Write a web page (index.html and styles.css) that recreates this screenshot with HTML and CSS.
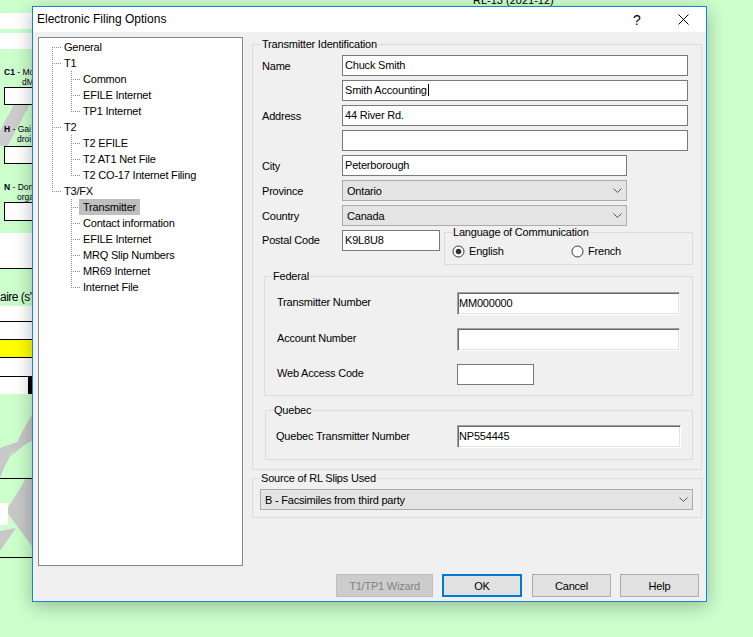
FILE: index.html
```html
<!DOCTYPE html>
<html lang="en">
<head>
<meta charset="utf-8">
<title>Electronic Filing Options</title>
<link rel="stylesheet" href="styles.css">
</head>
<body>
<div class="app-title"><span>RL-13 (2021-12)</span></div>
<div class="strip">
  <div class="band h13"></div>
  <div class="band white h16"></div>
  <div class="band h4"></div>
  <div class="band white h16"></div>
  <div class="band bl h38"><div class="bl-l1"><b>C1</b> - Mo</div><div class="bl-l2 in22">dM</div></div>
  <div class="bbox h18"></div>
  <div class="band bl h41 pt19 streak"><div class="bl-l1"><b>H</b> - Gai</div><div class="bl-l2 in17">droi</div></div>
  <div class="bbox h18"></div>
  <div class="band bl h38"><div class="bl-l1"><b>N</b> - Don</div><div class="bl-l2 in17">orga</div></div>
  <div class="bbox h19"></div>
  <div class="band h12"></div>
  <div class="band white lineb h36"></div>
  <div class="band big h37">aire (s'</div>
  <div class="band white lineb h16"></div>
  <div class="band white h17"></div>
  <div class="band yellow h19"></div>
  <div class="band white h18"></div>
  <div class="dd"><div class="dd-f"></div><div class="dd-b"></div></div>
  <svg class="wm" width="32" height="84" viewBox="0 0 32 84"><path d="M34 18 Q20 38 12 62 Q24 48 44 42 Z" fill="#c8c8c8"/><path d="M0 54 Q10 50 21 47 Q8 62 0 84 Z" fill="#c8c8c8"/></svg>
  <div class="hline"></div>
  <svg class="wm" width="32" height="78" viewBox="0 0 32 78"><path d="M27 -2 L6 32 L34 70 L44 0 Z" fill="#c8c8c8"/><rect x="0" y="24" width="8" height="22" fill="#ffffff"/><path d="M0 52 L16 49 L0 72 Z" fill="#c8c8c8"/></svg>
  <div class="hline"></div>
</div>

<div class="dialog">
  <div class="titlebar">
    <div class="title">Electronic Filing Options</div>
    <div class="cap-btn cap-help">?</div>
    <div class="cap-btn"><svg width="11" height="11" viewBox="0 0 11 11"><path d="M0.5 0.5L10.5 10.5M10.5 0.5L0.5 10.5" stroke="#000" stroke-width="1" fill="none"/></svg></div>
  </div>
  <div class="dlg-body">
    <div class="dlg-main">
      <div class="tree">
        <div class="row"><i class="c first"></i><span class="lbl">General</span></div>
        <div class="row"><i class="c tee"></i><span class="lbl">T1</span></div>
        <div class="row"><i class="c pipe"></i><i class="c tee"></i><span class="lbl">Common</span></div>
        <div class="row"><i class="c pipe"></i><i class="c tee"></i><span class="lbl">EFILE Internet</span></div>
        <div class="row"><i class="c pipe"></i><i class="c ell"></i><span class="lbl">TP1 Internet</span></div>
        <div class="row"><i class="c tee"></i><span class="lbl">T2</span></div>
        <div class="row"><i class="c pipe"></i><i class="c tee"></i><span class="lbl">T2 EFILE</span></div>
        <div class="row"><i class="c pipe"></i><i class="c tee"></i><span class="lbl">T2 AT1 Net File</span></div>
        <div class="row"><i class="c pipe"></i><i class="c ell"></i><span class="lbl">T2 CO-17 Internet Filing</span></div>
        <div class="row"><i class="c ell"></i><span class="lbl">T3/FX</span></div>
        <div class="row"><i class="c"></i><i class="c tee"></i><span class="lbl sel">Transmitter</span></div>
        <div class="row"><i class="c"></i><i class="c tee"></i><span class="lbl">Contact information</span></div>
        <div class="row"><i class="c"></i><i class="c tee"></i><span class="lbl">EFILE Internet</span></div>
        <div class="row"><i class="c"></i><i class="c tee"></i><span class="lbl">MRQ Slip Numbers</span></div>
        <div class="row"><i class="c"></i><i class="c tee"></i><span class="lbl">MR69 Internet</span></div>
        <div class="row"><i class="c"></i><i class="c ell"></i><span class="lbl">Internet File</span></div>
      </div>
      <div class="panel">
        <fieldset class="grp ti">
          <legend>Transmitter Identification</legend>
          <div class="ti-grid">
            <div class="flab">Name</div><div class="edit">Chuck Smith</div>
            <div class="flab"></div><div class="edit">Smith Accounting<span class="caret"></span></div>
            <div class="flab">Address</div><div class="edit">44 River Rd.</div>
            <div class="flab"></div><div class="edit"></div>
            <div class="flab">City</div><div class="edit short">Peterborough</div>
            <div class="flab">Province</div><div class="combo short"><span>Ontario</span><svg width="9" height="5" viewBox="0 0 9 5"><path d="M0.5 0.5L4.5 4.5L8.5 0.5" stroke="#555" fill="none"/></svg></div>
            <div class="flab">Country</div><div class="combo short"><span>Canada</span><svg width="9" height="5" viewBox="0 0 9 5"><path d="M0.5 0.5L4.5 4.5L8.5 0.5" stroke="#555" fill="none"/></svg></div>
          </div>
          <div class="postal-row">
            <div class="flab pl">Postal Code</div>
            <div class="edit postal">K9L8U8</div>
            <fieldset class="grp lang">
              <legend>Language of Communication</legend>
              <div class="radios">
                <div class="radio"><svg width="13" height="13" viewBox="0 0 13 13"><circle cx="6.5" cy="6.5" r="5.5" fill="#fff" stroke="#333"/><circle cx="6.5" cy="6.5" r="2.8" fill="#333"/></svg>English</div>
                <div class="radio"><svg width="13" height="13" viewBox="0 0 13 13"><circle cx="6.5" cy="6.5" r="5.5" fill="#fff" stroke="#333"/></svg>French</div>
              </div>
            </fieldset>
          </div>
          <fieldset class="grp fed">
            <legend>Federal</legend>
            <div class="fed-grid">
              <div class="flab up3">Transmitter Number</div><div class="sunk">MM000000</div>
              <div class="flab up3">Account Number</div><div class="sunk"></div>
              <div class="flab up3">Web Access Code</div><div class="edit web"></div>
            </div>
          </fieldset>
          <fieldset class="grp qc">
            <legend>Quebec</legend>
            <div class="qc-grid">
              <div class="flab up1">Quebec Transmitter Number</div><div class="sunk">NP554445</div>
            </div>
          </fieldset>
        </fieldset>
        <fieldset class="grp src">
          <legend>Source of RL Slips Used</legend>
          <div class="combo"><span>B - Facsimiles from third party</span><svg width="9" height="5" viewBox="0 0 9 5"><path d="M0.5 0.5L4.5 4.5L8.5 0.5" stroke="#555" fill="none"/></svg></div>
        </fieldset>
      </div>
    </div>
    <div class="buttons">
      <div class="btn dis">T1/TP1 Wizard</div>
      <div class="btn def">OK</div>
      <div class="btn">Cancel</div>
      <div class="btn">Help</div>
    </div>
  </div>
</div>
</body>
</html>
```
FILE: styles.css
```css
* { box-sizing: border-box; }
html, body { margin: 0; padding: 0; }
body {
  width: 753px; height: 637px; overflow: hidden; position: relative;
  background: #ccffcc; color: #000;
  font-family: "Liberation Sans", Arial, sans-serif; font-size: 11px; letter-spacing: -0.2px;
}

/* background application (only the strip left of the dialog is visible) */
.app-title { display: flex; height: 0; padding-left: 473px; white-space: nowrap; letter-spacing: 0; }
.app-title span { margin-top: -6px; line-height: 13px; font-size: 11px; }
.strip { width: 32px; overflow: hidden; letter-spacing: 0; }
.band { width: 32px; }
.white { background: #fff; }
.yellow { background: #ffff00; border-top: 1px solid #000; border-bottom: 1px solid #000; }
.lineb { border-bottom: 1px solid #000; }
.h4 { height: 4px; } .h12 { height: 12px; } .h13 { height: 13px; } .h16 { height: 16px; }
.h17 { height: 17px; } .h18 { height: 18px; } .h19 { height: 19px; } .h36 { height: 36px; }
.h37 { height: 37px; } .h38 { height: 38px; } .h41 { height: 41px; }
.bl { padding-top: 18px; font-size: 8.5px; line-height: 10px; color: #000022; white-space: nowrap; overflow: hidden; }
.bl.pt19 { padding-top: 19px; }
.bl-l1 { padding-left: 4px; }
.in22 { padding-left: 22px; }
.in17 { padding-left: 17px; }
.streak { background: linear-gradient(118deg, transparent 0 12px, #cdcdcd 12px 26px, transparent 26px); }
.bbox { width: 28px; margin-left: 4px; border: 1px solid #000; border-right: 0; background: #fff; }
.big { padding-top: 20px; font-size: 12px; line-height: 16px; letter-spacing: -0.5px; white-space: nowrap; overflow: hidden; }
.dd { display: flex; height: 18px; border-top: 1px solid #000; width: 32px; }
.dd-f { width: 28px; background: #fff; }
.dd-b { flex: 1; background: #000; }
.wm { display: block; }
.hline { height: 1px; width: 32px; background: #000; }

/* dialog window */
.dialog {
  position: absolute; left: 32px; top: 6px; width: 675px; height: 596px;
  border: 1px solid #1883d7; background: #f0f0f0;
  display: flex; flex-direction: column;
  box-shadow: 0 4px 18px rgba(0, 0, 0, 0.28);
}
.titlebar { display: flex; align-items: center; height: 25px; background: #fff; flex: none; }
.title { flex: 1; padding-left: 4px; font-size: 12px; line-height: 25px; letter-spacing: 0; }
.cap-btn { width: 46px; height: 25px; display: flex; align-items: center; justify-content: center; }
.cap-help { font-size: 14px; letter-spacing: 0; padding-top: 1px; }
.dlg-body { flex: 1; display: flex; flex-direction: column; padding: 5px 4px 4px 5px; }
.dlg-main { display: flex; gap: 9px; height: 529px; flex: none; }

/* tree */
.tree { width: 205px; height: 529px; flex: none; background: #fff; border: 1px solid #828790; padding: 1px 0 0 3px; }
.row { display: flex; height: 16px; line-height: 16px; white-space: nowrap; }
.c {
  flex: none; width: 19px; height: 16px; padding-left: 10px;
  background-origin: content-box; background-clip: content-box; background-repeat: no-repeat;
}
.tee {
  background-image: repeating-linear-gradient(#8c8c8c 0 1px, transparent 1px 2px), repeating-linear-gradient(90deg, #8c8c8c 0 1px, transparent 1px 2px);
  background-position: 0 0, 0 8px; background-size: 1px 16px, 9px 1px;
}
.ell {
  background-image: repeating-linear-gradient(#8c8c8c 0 1px, transparent 1px 2px), repeating-linear-gradient(90deg, #8c8c8c 0 1px, transparent 1px 2px);
  background-position: 0 0, 0 8px; background-size: 1px 8px, 9px 1px;
}
.first {
  background-image: repeating-linear-gradient(#8c8c8c 0 1px, transparent 1px 2px), repeating-linear-gradient(90deg, #8c8c8c 0 1px, transparent 1px 2px);
  background-position: 0 8px, 0 8px; background-size: 1px 8px, 9px 1px;
}
.pipe {
  background-image: repeating-linear-gradient(#8c8c8c 0 1px, transparent 1px 2px);
  background-position: 0 0; background-size: 1px 16px;
}
.lbl { margin-left: -1px; padding: 0 4px; height: 16px; }
.lbl.sel { background: #bfbfbf; }

/* right panel */
.panel { width: 450px; flex: none; display: flex; flex-direction: column; }
.grp { margin: 0; min-width: 0; border: 1px solid #dcdcdc; padding: 0; }
.grp > legend { padding: 0 1px; line-height: 13px; height: 13px; margin-left: 0; }
.ti { margin-top: 1px; padding: 4px 0 9px 0; }
.ti > legend { margin-left: 8px; }
.ti-grid { display: grid; grid-template-columns: 80px 1fr; row-gap: 4px; margin: 0 13px 0 9px; align-items: center; }
.flab { white-space: nowrap; }
.up3 { padding-bottom: 3px; }
.up1 { padding-bottom: 1px; }
.edit { height: 21px; border: 1px solid #7a7a7a; background: #fff; padding-left: 2px; line-height: 19px; white-space: nowrap; }
.short { width: 285px; }
.caret { display: inline-block; width: 1px; height: 12px; background: #000; vertical-align: -2px; margin-left: 1px; }
.combo {
  height: 21px; border: 1px solid #acacac; background: #e4e4e4;
  display: flex; align-items: center; justify-content: space-between; padding: 0 4px 0 4px; white-space: nowrap;
}
.combo svg { flex: none; }
.postal-row { display: flex; align-items: flex-start; margin: 0 8px 0 9px; }
.pl { width: 80px; height: 21px; margin-top: 4px; line-height: 21px; flex: none; }
.postal { width: 98px; margin-top: 4px; flex: none; }
.lang { flex: 1; margin-left: 4px; padding: 5px 0 6px 7px; }
.radios { display: grid; grid-template-columns: 119px 1fr; height: 14px; }
.radio { display: flex; align-items: center; gap: 4px; line-height: 14px; }
.radio svg { flex: none; }
.fed { margin: 5px 8px 0 11px; padding: 9px 0 10px 0; }
.fed > legend { margin-left: 7px; }
.fed-grid { display: grid; grid-template-columns: 180px 1fr; row-gap: 13px; margin: 0 12px 0 12px; align-items: center; }
.sunk {
  height: 23px; background: #fff; border: 1px solid; border-color: #a0a0a0 #ffffff #ffffff #a0a0a0;
  box-shadow: inset 1px 1px 0 #696969, inset -1px -1px 0 #e3e3e3;
  padding-left: 1px; line-height: 21px; white-space: nowrap;
}
.web { width: 77px; }
.qc { margin: 8px 8px 0 12px; padding: 8px 0 11px 0; }
.qc > legend { margin-left: 7px; }
.qc-grid { display: grid; grid-template-columns: 181px 1fr; margin: 0 11px 0 10px; align-items: center; }
.src { margin-top: 2px; padding: 4px 8px 7px 7px; }

/* buttons */
.buttons { display: flex; justify-content: flex-end; gap: 9px; margin-top: 8px; padding-right: 3px; height: 23px; flex: none; }
.btn { width: 79px; height: 23px; border: 1px solid #adadad; background: #e1e1e1; display: flex; align-items: center; justify-content: center; white-space: nowrap; }
.btn.def { width: 80px; border: 2px solid #0078d7; margin-right: 1px; }
.btn.dis { width: 97px; background: #cccccc; border-color: #bfbfbf; color: #838383; }
```
